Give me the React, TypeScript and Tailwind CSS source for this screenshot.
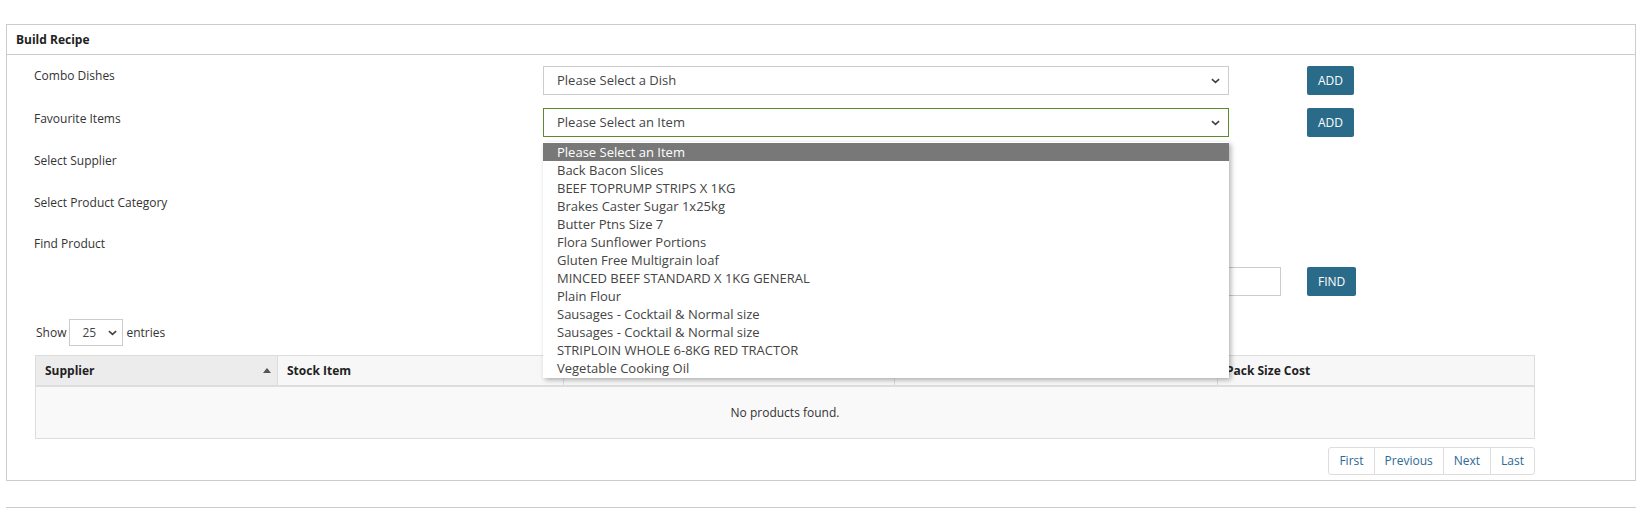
import React from "react";

const items = [
  "Please Select an Item",
  "Back Bacon Slices",
  "BEEF TOPRUMP STRIPS X 1KG",
  "Brakes Caster Sugar 1x25kg",
  "Butter Ptns Size 7",
  "Flora Sunflower Portions",
  "Gluten Free Multigrain loaf",
  "MINCED BEEF STANDARD X 1KG GENERAL",
  "Plain Flour",
  "Sausages - Cocktail & Normal size",
  "Sausages - Cocktail & Normal size",
  "STRIPLOIN WHOLE 6-8KG RED TRACTOR",
  "Vegetable Cooking Oil",
];

function Chevron({ className = "" }: { className?: string }) {
  return (
    <svg viewBox="0 0 10 6" className={className} width="9" height="6">
      <path d="M1 1l4 3.6L9 1" fill="none" stroke="#444" strokeWidth="1.8" />
    </svg>
  );
}

function FakeSelect({ text, focused = false }: { text: string; focused?: boolean }) {
  return (
    <div
      className={`flex h-[29px] w-[686px] items-center justify-between border bg-white pl-[13px] pr-[8px] text-[13px] text-[#444] ${
        focused ? "border-[#5b8a2f]" : "border-[#cccccc]"
      }`}
    >
      <span>{text}</span>
      <Chevron />
    </div>
  );
}

function AddButton({ label }: { label: string }) {
  return (
    <button className="ml-[78px] h-[29px] rounded-[2px] bg-[#2b6b8a] px-[11px] text-[12px] text-white">
      {label}
    </button>
  );
}

export default function App() {
  return (
    <div
      className="min-h-[531px] bg-white pt-[24px] text-[#333]"
      style={{ fontFamily: '"Open Sans", "Noto Sans", sans-serif' }}
    >
      <div className="mx-[6px] border border-[#cccccc]">
        <div className="flex h-[30px] items-center border-b border-[#cccccc] px-[9px] text-[12px] font-bold text-[#222]">
          Build Recipe
        </div>

        <div className="pl-[27px] pr-[101px] pt-[11px] pb-[5px] text-[12px]">
          {/* Combo Dishes */}
          <div className="mb-[13px] flex items-start">
            <div className="w-[509px] pt-px">Combo Dishes</div>
            <FakeSelect text="Please Select a Dish" />
            <AddButton label="ADD" />
          </div>

          {/* Favourite Items with open list */}
          <div className="mb-[13px] flex items-start">
            <div className="w-[509px] pt-[2px]">Favourite Items</div>
            <div className="relative">
              <FakeSelect text="Please Select an Item" focused />
              <div className="absolute left-0 top-full z-10 mt-[5px] w-[686px] bg-white py-px shadow-[2px_2px_5px_rgba(0,0,0,0.3)]">
                {items.map((it, i) => (
                  <div
                    key={i}
                    className={`h-[18px] pl-[14px] text-[13px] leading-[18px] ${
                      i === 0 ? "bg-[#787878] text-white" : "text-[#444]"
                    }`}
                  >
                    {it}
                  </div>
                ))}
              </div>
            </div>
            <AddButton label="ADD" />
          </div>

          <div className="mb-[13px] flex h-[29px] items-start">
            <div className="w-[509px] pt-[2px]">Select Supplier</div>
          </div>

          <div className="mb-[13px] flex h-[29px] items-start">
            <div className="w-[509px] pt-[2px]">Select Product Category</div>
          </div>

          <div className="mb-[4px] flex h-[29px] items-start">
            <div className="w-[509px] pt-px">Find Product</div>
          </div>

          <div className="flex items-center">
            <div className="ml-[509px] h-[29px] w-[738px] border border-[#cccccc] bg-white" />
            <button className="ml-[26px] h-[29px] rounded-[2px] bg-[#2b6b8a] px-[11px] text-[12px] text-white">
              FIND
            </button>
          </div>

          {/* Show entries */}
          <div className="mt-[23px] flex items-center pl-[2px]">
            <span>Show</span>
            <div className="mx-[3px] flex h-[27px] w-[54px] items-center justify-between border border-[#cccccc] pl-[12px] pr-[5px] text-[12px] text-[#444]">
              <span>25</span>
              <Chevron />
            </div>
            <span>entries</span>
          </div>

          {/* Table */}
          <div className="mt-[9px] ml-px w-[1500px] border border-[#dddddd]">
            <div className="flex h-[31px] border-b-2 border-[#dddddd] text-[12px] font-bold text-[#222]">
              <div className="relative flex w-[242px] items-center border-r border-[#dddddd] bg-[#ececec] px-[9px]">
                Supplier
                <svg viewBox="0 0 8 5" width="8" height="5" className="absolute right-[6px] top-[12px]">
                  <path d="M0 5L4 0l4 5z" fill="#555" />
                </svg>
              </div>
              <div className="flex w-[286px] items-center border-r border-[#dddddd] bg-[#f7f7f7] px-[9px]">
                Stock Item
              </div>
              <div className="w-[331px] border-r border-[#dddddd] bg-[#f7f7f7]" />
              <div className="w-[323px] border-r border-[#dddddd] bg-[#f7f7f7]" />
              <div className="flex flex-1 items-center bg-[#f7f7f7] px-[8px]">Pack Size Cost</div>
            </div>
            <div className="flex h-[51px] items-center justify-center bg-[#f9f9f9] text-[12px] text-[#333]">
              No products found.
            </div>
          </div>

          {/* Pagination */}
          <div className="mt-[8px] flex w-[1501px] justify-end">
            <div className="flex h-[28px] overflow-hidden rounded-[3px] border border-[#dddddd] text-[12px] text-[#2a6a94]">
              <div className="flex items-center px-[10px]">First</div>
              <div className="flex items-center border-l border-[#dddddd] px-[10px]">Previous</div>
              <div className="flex items-center border-l border-[#dddddd] px-[10px]">Next</div>
              <div className="flex items-center border-l border-[#dddddd] px-[10px]">Last</div>
            </div>
          </div>
        </div>
      </div>

      <div className="mx-[6px] mt-[26px] border-t border-[#cccccc]" />
    </div>
  );
}
